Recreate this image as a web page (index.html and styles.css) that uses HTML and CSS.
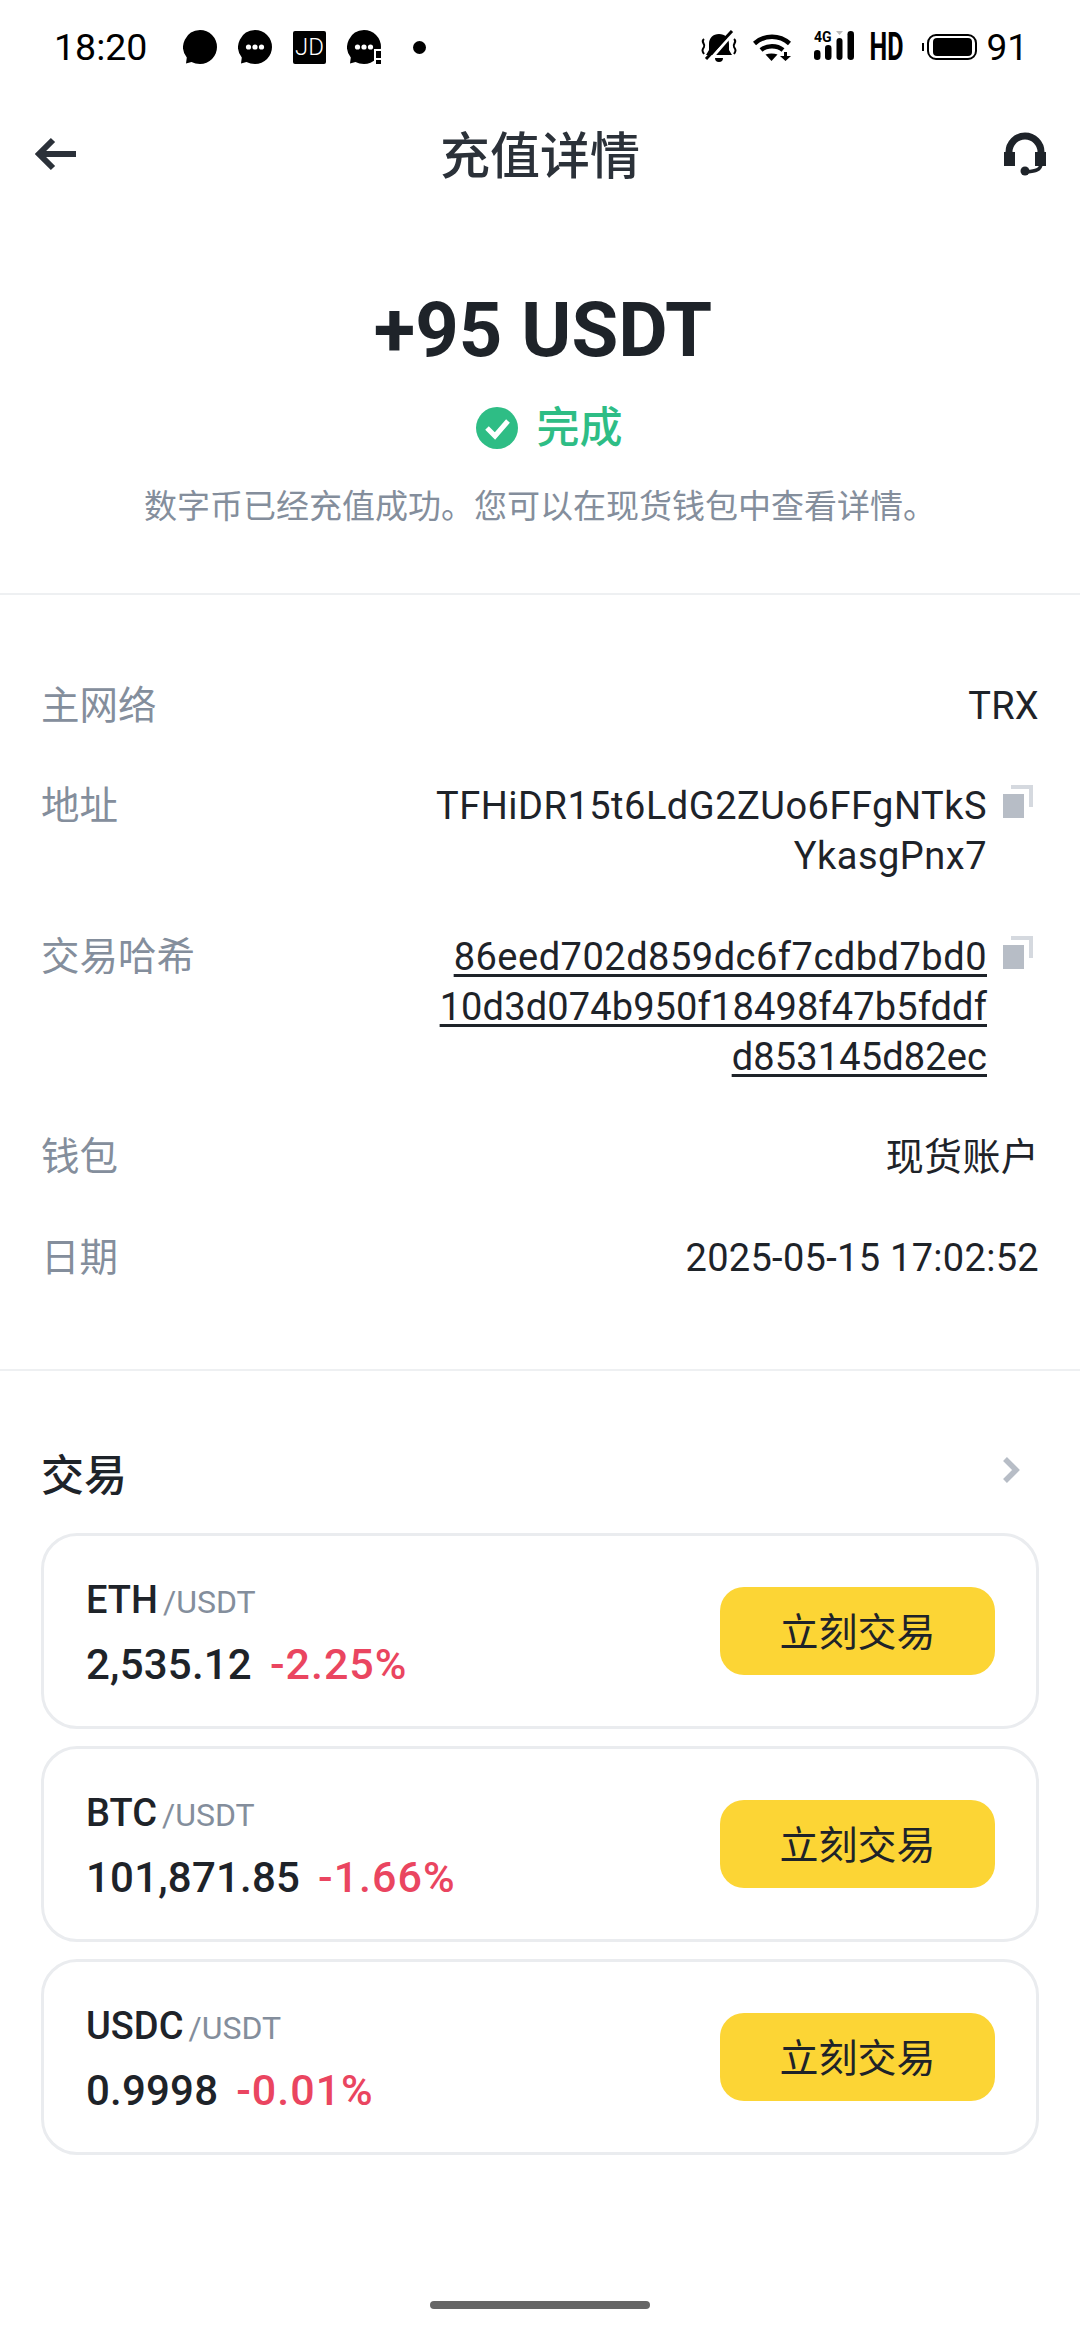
FILE: index.html
```html
<!DOCTYPE html>
<html lang="zh-CN">
<head>
    <meta charset="UTF-8">
    <meta name="viewport" content="width=device-width, initial-scale=1.0">
    <title>充值详情</title>
    <link rel="stylesheet" href="styles.css">
</head>
<body>
    <div class="status-bar">
        <div class="status-left">
            <span class="clock">18:20</span>
            <svg class="notif" viewBox="0 0 34 34"><path d="M17 0a17 17 0 0 1 0 34c-3 0-6-.7-8.500-2L3 33.500l.8-6A17 17 0 0 1 17 0z"/></svg>
            <svg class="notif" viewBox="0 0 34 34"><path d="M17 0a17 17 0 0 1 0 34c-3 0-6-.7-8.500-2L3 33.500l.8-6A17 17 0 0 1 17 0z"/><circle cx="10.500" cy="17" r="2.600" fill="#fff"/><circle cx="17" cy="17" r="2.600" fill="#fff"/><circle cx="23.500" cy="17" r="2.600" fill="#fff"/></svg>
            <span class="jd">JD</span>
            <svg class="notif" viewBox="0 0 34 34"><path d="M17 0a17 17 0 0 1 0 34c-3 0-6-.7-8.500-2L3 33.500l.8-6A17 17 0 0 1 17 0z"/><circle cx="10.500" cy="17" r="2.600" fill="#fff"/><circle cx="17" cy="17" r="2.600" fill="#fff"/><circle cx="23.500" cy="17" r="2.600" fill="#fff"/><rect x="27" y="19" width="8" height="15" fill="#fff"/><rect x="29" y="21" width="5" height="7"/><rect x="29" y="30" width="5" height="4"/></svg>
            <span class="dot"></span>
        </div>
        <div class="status-right">
            <svg class="ic-bell" viewBox="0 0 38 34"><path d="M19 4c-6 0-10 4-10 10v6l-3 5h26l-3-5v-6c0-6-4-10-10-10zM15 28h8a4 4 0 0 1-8 0z"/><path d="M9 31L35 1" stroke="#fff" stroke-width="3"/><path d="M6 29L32 1" stroke="#000" stroke-width="3"/><path d="M4 9c-4 3 2 5 0 8s-2 4 0 7M34 9c4 3-2 5 0 8s2 4 0 7" fill="none" stroke="#000" stroke-width="2"/></svg>
            <svg class="ic-wifi" viewBox="0 0 38 27"><path d="M1.500 9.500c10-9 25-9 35 0" fill="none" stroke="#000" stroke-width="4.500"/><path d="M8 16c6-5 16-5 22 0" fill="none" stroke="#000" stroke-width="4.500"/><path d="M12.500 20.500c3.500-1.500 8.500-1.500 12 0L18.500 27z"/><path d="M31 18h3v4h4l-5.500 5-5.500-5h4z"/></svg>
            <svg class="ic-signal" viewBox="0 -4 40 33"><text x="0" y="11" class="signal-label">4G</text><rect x="0" y="19" width="6.500" height="10" rx="3.200"/><rect x="11" y="14" width="6.500" height="15" rx="3.200"/><rect x="22.500" y="7" width="6" height="22" rx="3"/><rect x="33.500" y="0" width="6.500" height="29" rx="3.200"/><path d="M22 0h7l-3.500 4z" fill="#bbb"/></svg>
            <span class="hd">HD</span>
            <svg class="ic-batt" viewBox="0 0 55 26"><path d="M1 9v8" stroke="#000" stroke-width="2"/><rect x="6" y="1" width="48" height="24" rx="8" fill="none" stroke="#000" stroke-width="2"/><rect x="11" y="4" width="39" height="18" rx="4"/></svg>
            <span class="batt-num">91</span>
        </div>
    </div>

    <div class="nav">
        <svg class="nav-back" viewBox="0 0 42 34"><path d="M19 3L5 17l14 14M6 17h36" fill="none" stroke="#2b3139" stroke-width="6"/></svg>
        <h1 class="nav-title">充值详情</h1>
        <svg class="nav-help" viewBox="0 0 42 44"><path d="M5 26V20a16 16 0 0 1 32 0v6" fill="none" stroke="#1e2329" stroke-width="7"/><rect x="0" y="20" width="11" height="14" fill="#1e2329"/><rect x="31" y="20" width="11" height="14" fill="#1e2329"/><path d="M37 32c0 6-6 7-14 8" fill="none" stroke="#1e2329" stroke-width="3.500"/><circle cx="21" cy="39" r="4.500" fill="#1e2329"/></svg>
    </div>

    <div class="summary">
        <div class="amount">+95 USDT</div>
        <div class="state">
            <svg class="state-icon" viewBox="0 0 42 42"><circle cx="21" cy="21" r="21" fill="#2ebd85"/><path d="M11 21l8 8 13-15" fill="none" stroke="#fff" stroke-width="5"/></svg>
            <span>完成</span>
        </div>
        <p class="state-note">数字币已经充值成功。您可以在现货钱包中查看详情。</p>
    </div>

    <div class="details">
        <div class="row">
            <span class="row-label">主网络</span>
            <span class="row-value">TRX</span>
        </div>
        <div class="row">
            <span class="row-label">地址</span>
            <div class="row-copy">
                <span class="row-value addr">TFHiDR15t6LdG2ZUo6FFgNTkS<br>YkasgPnx7</span>
                <svg class="copy" viewBox="0 0 30 33"><path d="M8 0h22v22h-4V4H8z" fill="#d5d9df"/><rect x="0" y="9" width="21" height="24" fill="#b7bdc6"/></svg>
            </div>
        </div>
        <div class="row">
            <span class="row-label">交易哈希</span>
            <div class="row-copy">
                <span class="row-value link"><span class="link-wide">86eed702d859dc6f7cdbd7bd0</span><br>10d3d074b950f18498f47b5fddf<br>d853145d82ec</span>
                <svg class="copy" viewBox="0 0 30 33"><path d="M8 0h22v22h-4V4H8z" fill="#d5d9df"/><rect x="0" y="9" width="21" height="24" fill="#b7bdc6"/></svg>
            </div>
        </div>
        <div class="row">
            <span class="row-label">钱包</span>
            <span class="row-value">现货账户</span>
        </div>
        <div class="row">
            <span class="row-label">日期</span>
            <span class="row-value">2025-05-15 17:02:52</span>
        </div>
    </div>

    <div class="trade">
        <div class="trade-head">
            <h2>交易</h2>
            <svg class="chevron" viewBox="0 0 17 26"><path d="M2 2l11 11L2 24" fill="none" stroke="#b7bdc6" stroke-width="5.500"/></svg>
        </div>
        <div class="pair-card">
            <div class="pair-info">
                <div class="pair-name">ETH<span>/USDT</span></div>
                <div class="pair-price">2,535.12<span>-2.25%</span></div>
            </div>
            <div class="pair-btn">立刻交易</div>
        </div>
        <div class="pair-card">
            <div class="pair-info">
                <div class="pair-name">BTC<span>/USDT</span></div>
                <div class="pair-price">101,871.85<span>-1.66%</span></div>
            </div>
            <div class="pair-btn">立刻交易</div>
        </div>
        <div class="pair-card">
            <div class="pair-info">
                <div class="pair-name">USDC<span>/USDT</span></div>
                <div class="pair-price">0.9998<span>-0.01%</span></div>
            </div>
            <div class="pair-btn">立刻交易</div>
        </div>
    </div>

    <div class="home-bar"></div>
</body>
</html>
```

FILE: styles.css
```css
* {
    box-sizing: border-box;
}
html, body {
    margin: 0;
    padding: 0;
}
body {
    width: 1080px;
    height: 2340px;
    overflow: hidden;
    background: #fff;
    color: #1e2329;
    font-family: Roboto, "Noto Sans CJK SC", sans-serif;
    position: relative;
}
svg {
    display: block;
    flex: none;
}

/* status bar */
.status-bar {
    height: 94px;
    padding: 0 52px 0 54px;
    display: flex;
    justify-content: space-between;
    align-items: center;
    color: #000;
}
.status-left, .status-right {
    display: flex;
    align-items: center;
}
.clock {
    font-size: 37.5px;
    width: 129px;
}
.notif {
    width: 34px;
    height: 34px;
    margin-right: 21px;
}
.jd {
    width: 33px;
    height: 33px;
    margin-right: 21px;
    background: #000;
    color: #fff;
    font-size: 24px;
    font-weight: 300;
    line-height: 33px;
    text-align: center;
    border-radius: 2px;
}
.dot {
    width: 13px;
    height: 13px;
    margin-left: 11px;
    border-radius: 50%;
    background: #000;
}
.ic-bell {
    width: 38px;
    height: 34px;
    margin-right: 15px;
}
.ic-wifi {
    width: 38px;
    height: 27px;
    margin-right: 23px;
}
.ic-signal {
    width: 40px;
    height: 33px;
    margin: 0 16px 8px 0;
}
.signal-label {
    font-size: 14px;
    font-weight: 700;
}
.hd {
    width: 33px;
    margin-right: 19px;
    font-size: 38px;
    font-weight: 700;
    line-height: 38px;
    display: flex;
    justify-content: center;
    transform: scaleX(0.66);
}
.ic-batt {
    width: 55px;
    height: 26px;
    margin-right: 9px;
}
.batt-num {
    font-size: 37px;
}

/* nav */
.nav {
    height: 120px;
    padding: 0 34px;
    display: flex;
    justify-content: space-between;
    align-items: center;
}
.nav-back {
    width: 42px;
    height: 34px;
}
.nav-title {
    margin: 0 0 4px;
    font-size: 50px;
    font-weight: 500;
    color: #2b3139;
}
.nav-help {
    width: 42px;
    height: 44px;
}

/* amount + state */
.summary {
    height: 381px;
    padding-top: 72px;
    border-bottom: 2px solid #eef0f2;
    text-align: center;
}
.amount {
    padding-left: 6px;
    font-size: 76px;
    font-weight: 700;
    line-height: 88px;
}
.state {
    margin-top: 26px;
    padding-left: 18px;
    display: flex;
    justify-content: center;
    align-items: center;
    gap: 19px;
    color: #2ebd85;
    font-size: 43px;
    font-weight: 500;
    line-height: 56px;
}
.state-icon {
    width: 42px;
    height: 42px;
}
.state-note {
    margin: 29px 0 0;
    font-size: 33px;
    line-height: 44px;
    color: #848e9c;
}

/* detail rows */
.details {
    height: 776px;
    padding: 85.5px 41px 0;
    border-bottom: 2px solid #eef0f2;
    display: flex;
    flex-direction: column;
    gap: 50.5px;
}
.row {
    display: flex;
    justify-content: space-between;
    align-items: flex-start;
    font-size: 38.5px;
    line-height: 50px;
}
.row-label {
    color: #848e9c;
}
.row-value {
    font-size: 38px;
    letter-spacing: 0.3px;
    text-align: right;
}
.row-copy {
    display: flex;
    gap: 16px;
    margin-right: 6px;
}
.addr {
    letter-spacing: 0.5px;
}
.link {
    letter-spacing: 0.13px;
    text-decoration: underline;
    text-underline-offset: 4px;
}
.link-wide {
    letter-spacing: 0.5px;
}
.copy {
    width: 30px;
    height: 33px;
    margin-top: 4px;
}

/* trade list */
.trade {
    padding: 71px 41px 0;
}
.trade-head {
    height: 60px;
    margin-bottom: 31px;
    display: flex;
    justify-content: space-between;
    align-items: center;
}
.trade-head h2 {
    margin: 0;
    font-size: 43px;
    font-weight: 500;
}
.chevron {
    width: 17px;
    height: 26px;
    margin: -4px 19px 0 0;
}
.pair-card {
    height: 196px;
    margin-bottom: 17px;
    padding: 0 41px 0 42px;
    border: 3px solid #eaecef;
    border-radius: 36px;
    display: flex;
    justify-content: space-between;
    align-items: center;
}
.pair-info {
    padding-top: 3px;
}
.pair-name {
    font-size: 38px;
    font-weight: 500;
    line-height: 48px;
}
.pair-name span {
    margin-left: 5px;
    font-size: 32px;
    font-weight: 400;
    color: #848e9c;
}
.pair-price {
    margin-top: 13px;
    font-size: 42px;
    font-weight: 500;
    line-height: 50px;
    letter-spacing: 0.2px;
}
.pair-price span {
    margin-left: 18px;
    font-size: 43px;
    letter-spacing: 1px;
    color: #ea4560;
}
.pair-btn {
    width: 275px;
    height: 88px;
    padding-top: 2px;
    border-radius: 24px;
    background: #fcd535;
    font-size: 39px;
    line-height: 88px;
    text-align: center;
}

.home-bar {
    position: absolute;
    left: 430px;
    top: 2301px;
    width: 220px;
    height: 8px;
    border-radius: 4px;
    background: #666;
}
```
